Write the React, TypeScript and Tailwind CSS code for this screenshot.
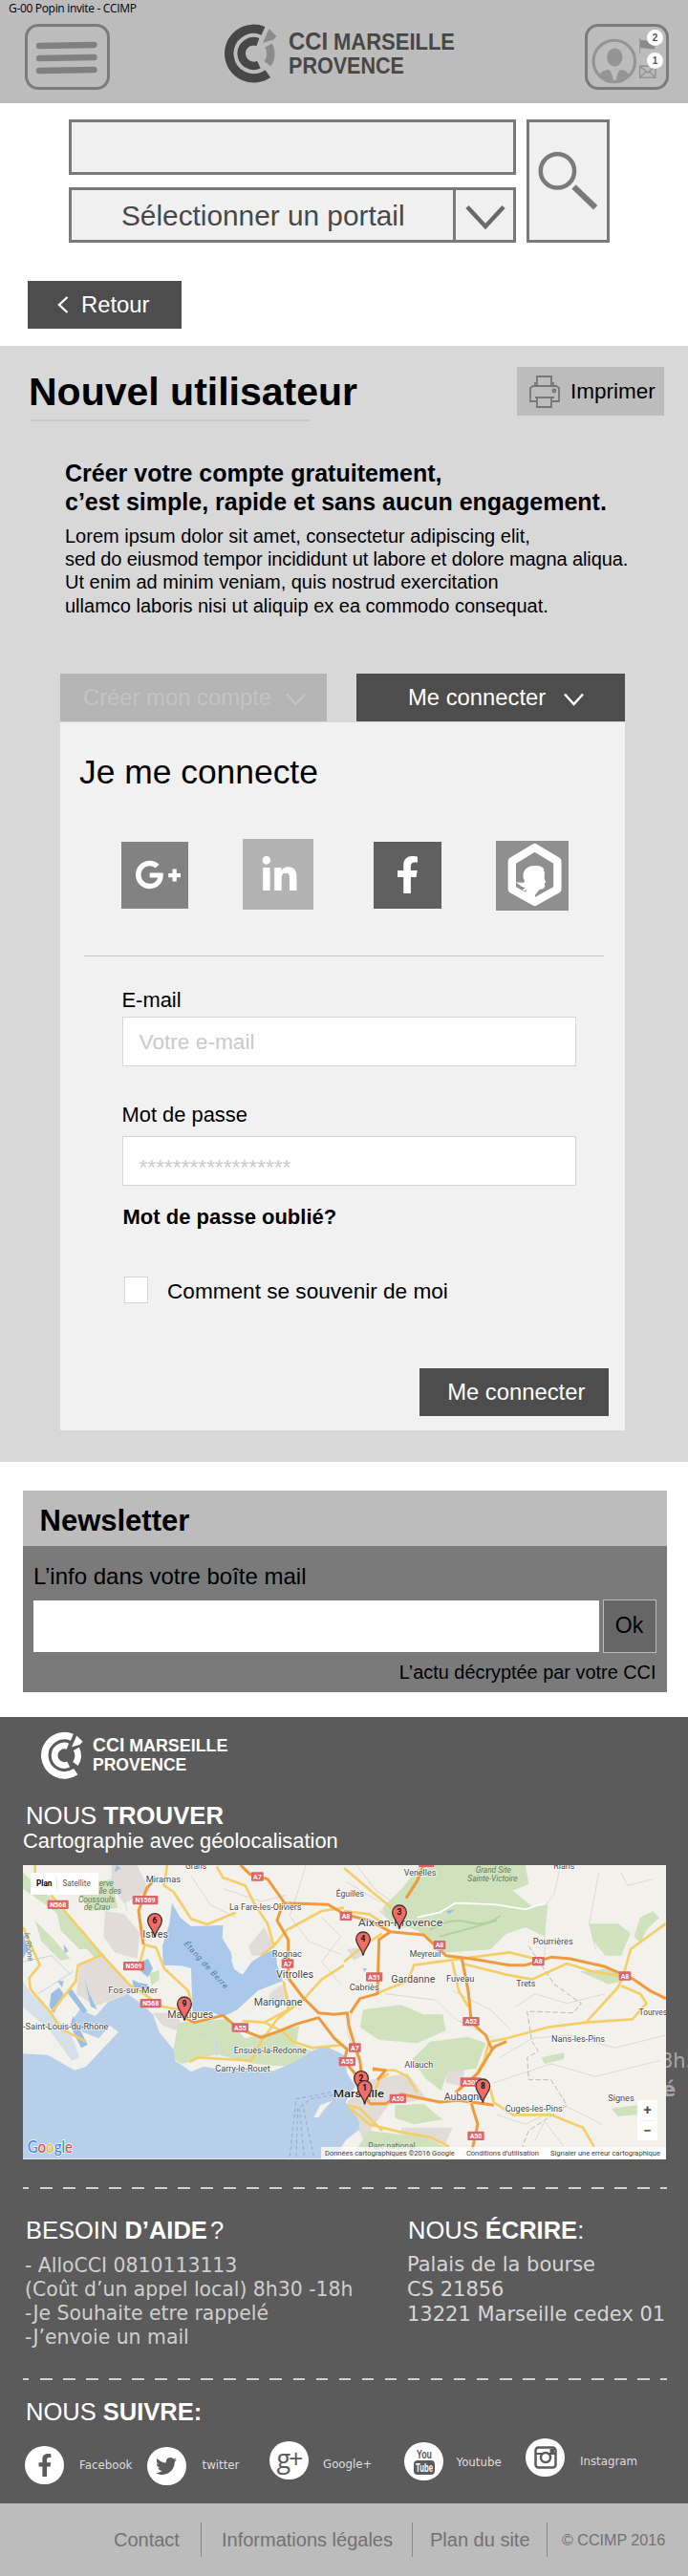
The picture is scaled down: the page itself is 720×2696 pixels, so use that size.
import type { ReactNode } from "react";
import { FaFacebookF, FaGooglePlusG, FaLinkedinIn, FaTwitter } from "react-icons/fa";

export default function App() {
  return (
    <div className="w-[720px] overflow-hidden bg-white font-['Liberation_Sans',Arial,sans-serif] text-black">
      <Header />
      <SearchBar />
      <div className="pt-[40px] pb-[17.5px] pl-[29px]">
        <button className="flex h-[50px] w-[160.5px] items-center bg-[#4d4d4d] pl-[31px] text-[23.8px] text-white">
          <svg width="12" height="18" viewBox="0 0 12 18" fill="none" className="mr-[13px]">
            <path d="M10.5 1 2 9l8.5 8" stroke="currentColor" strokeWidth="2.4" />
          </svg>
          Retour
        </button>
      </div>
      <NewUser />
      <Newsletter />
      <Footer />
    </div>
  );
}

function Emblem({ light, className }: { light?: boolean; className: string }) {
  const main = light ? "#fff" : "#474747";
  const accent = light ? "#fff" : "#8b8b8b";
  return (
    <svg viewBox="234.5 24.5 55 62" className={className} fill="none">
      <path d="M275 31.8A25.75 25.75 0 1 0 279.8 76.6" stroke={main} strokeWidth="9.5" />
      <path d="M269.4 43.5A12.8 12.8 0 1 0 270.4 67.1" stroke={main} strokeWidth="8.5" />
      <path d="M280.5 47A18 18 0 0 1 279.4 66.3" stroke={accent} strokeWidth="8.5" />
      <path d="M281 29.5 289 37.5 285.5 41 274.5 44.5Z" fill={accent} />
    </svg>
  );
}

function Wordmark({ light, className }: { light?: boolean; className: string }) {
  return (
    <svg
      viewBox="0 0 176 48"
      className={className}
      fill={light ? "#fff" : "#474747"}
      fontFamily="'Liberation Sans', Arial, sans-serif"
      fontWeight="700"
    >
      <text x="0" y="20" fontSize="26" textLength="41" lengthAdjust="spacingAndGlyphs">CCI</text>
      <text x="47" y="20" fontSize="23" textLength="127" lengthAdjust="spacingAndGlyphs">MARSEILLE</text>
      <text x="0" y="44.5" fontSize="23.5" textLength="121" lengthAdjust="spacingAndGlyphs">PROVENCE</text>
    </svg>
  );
}

function Header() {
  return (
    <header className="h-[108px] bg-[#bcbcbc]">
      <div className="h-[25px] pl-[9px] font-['Open_Sans',sans-serif] text-[12px] leading-[17.5px] tracking-[-0.32px]">
        G-00 Popin invite - CCIMP
      </div>
      <div className="flex h-[69px] pr-[20px] pl-[26px]">
        <button className="h-[69px] w-[88.5px] rounded-[14px] border-[3.5px] border-[#7b7b7b]">
          <svg viewBox="0 0 82 62" className="h-full w-full" stroke="#808080" strokeWidth="6.5" strokeLinecap="round">
            <path d="M12 19.5 69 18.5M12 32.5 69 31.5M12 45.5 69 44.5" />
          </svg>
        </button>
        <div className="ml-[120px] flex">
          <Emblem className="h-[62px] w-[55px]" />
          <Wordmark className="mt-[7px] ml-[12.5px] h-[48px] w-[176px] overflow-visible" />
        </div>
        <div className="relative ml-auto h-[69px] w-[88.5px] rounded-[14px] border-[3.5px] border-[#7b7b7b]">
          <svg viewBox="615 28.5 81.5 62" className="h-full w-full">
            <circle cx="642.5" cy="64" r="21.5" fill="none" stroke="#949494" strokeWidth="3" />
            <ellipse cx="643" cy="60" rx="8" ry="9.5" fill="#949494" />
            <path d="M627 80c1-5 5-7 10-7.5 3 3 4 8 4.5 12-5 1-10-1-14.5-4.5ZM658 80c-1-5-5-7-9-7.5-3 3-4.5 8-5 12 5 1 10-1 14-4.5Z" fill="#949494" />
            <path d="M669 40v16M669 43c5-2 7 2 15 0v8c-8 1-9-2-15-1Z" fill="#8a8a8a" stroke="#949494" />
            <path d="M669 69h16v12h-16ZM669 69l8 7 8-7M669 81l6-6M685 81l-6-6" fill="none" stroke="#949494" strokeWidth="1.5" />
          </svg>
          <Badge className="top-[3px]">2</Badge>
          <Badge className="top-[27px]">1</Badge>
        </div>
      </div>
    </header>
  );
}

function Badge({ children, className }: { children: ReactNode; className: string }) {
  return (
    <span
      className={`${className} absolute right-[3px] flex h-[17px] w-[17px] items-center justify-center rounded-full bg-white text-[10px] font-bold text-[#555]`}
    >
      {children}
    </span>
  );
}

function SearchBar() {
  return (
    <div className="flex h-[146px] pt-[17px] pl-[72px]">
      <div className="w-[468px]">
        <div className="h-[58px] border-3 border-[#7a7a7a] bg-[#f0f0f0]" />
        <div className="mt-[13px] flex h-[58px] border-3 border-[#7a7a7a] bg-[#f0f0f0]">
          <div className="w-[402px] border-r-3 border-[#7a7a7a] pl-[52px] text-[29.8px] leading-[54px] whitespace-nowrap text-[#484848]">
            Sélectionner un portail
          </div>
          <svg viewBox="0 0 60 52" className="h-[52px] w-[60px]" fill="none">
            <path d="M12 17.5 31 38 50 17.5" stroke="#6a6a6a" strokeWidth="4.5" />
          </svg>
        </div>
      </div>
      <button className="ml-[11px] h-[129px] w-[87px] border-[3.5px] border-[#7a7a7a] bg-[#f0f0f0]">
        <svg viewBox="554.5 128.5 80 122" className="h-full w-full" fill="none" stroke="#7a7a7a">
          <circle cx="583.5" cy="179" r="17.5" strokeWidth="4.5" />
          <path d="M600.5 195.5 623 217" strokeWidth="6" />
        </svg>
      </button>
    </div>
  );
}

function Chevron({ className }: { className: string }) {
  return (
    <svg viewBox="0 0 21 14" className={`${className} h-[14px] w-[21px]`} fill="none">
      <path d="M1 1.5 10.5 12 20 1.5" stroke="currentColor" strokeWidth="2.5" />
    </svg>
  );
}

function NewUser() {
  return (
    <section className="h-[1168px] bg-[#d8d8d8] pt-[22.5px]">
      <div className="flex h-[51px] justify-between pr-[25px] pl-[30px]">
        <h1 className="mt-px text-[41px] leading-[50px] font-bold whitespace-nowrap">Nouvel utilisateur</h1>
        <button className="flex w-[154px] items-center bg-[#bcbcbc] pl-[13px] text-[22.5px]">
          <svg width="32" height="34" viewBox="0 0 32 34" fill="none" stroke="#777" strokeWidth="1.8" className="mr-[11px]">
            <path d="M8 11V1h15v10M8 27H1V13l3-2h24l3 2v14h-7M6 23h20M8 23v10h15V23" />
            <path d="M6 7v4M25 7v4" />
            <circle cx="26" cy="16" r="1.5" />
          </svg>
          Imprimer
        </button>
      </div>
      <div className="mt-[4px] ml-[32px] h-[2px] w-[293px] bg-[#cacaca]" />

      <h2 className="pt-[39px] pl-[68px] text-[25px] leading-[30px] font-bold whitespace-nowrap">
        Créer votre compte gratuitement,
        <br />
        c’est simple, rapide et sans aucun engagement.
      </h2>
      <p className="pt-[9px] pl-[68px] text-[20px] leading-[24.2px] whitespace-nowrap">
        Lorem ipsum dolor sit amet, consectetur adipiscing elit,
        <br />
        <span className="tracking-[-0.12px]">sed do eiusmod tempor incididunt ut labore et dolore magna aliqua.</span>
        <br />
        Ut enim ad minim veniam, quis nostrud exercitation
        <br />
        ullamco laboris nisi ut aliquip ex ea commodo consequat.
      </p>

      <div className="mx-[63px] mt-[59px] flex w-[590.5px] justify-between text-[23.8px] leading-[49px] whitespace-nowrap">
        <button className="flex h-[50px] w-[278.5px] bg-[#b4b4b4] pl-[24px] text-[#c3c3c3]">
          Créer mon compte
          <Chevron className="mt-[20px] ml-[15px]" />
        </button>
        <button className="flex h-[50px] w-[280.5px] bg-[#4d4d4d] pl-[54px] text-white">
          Me connecter
          <Chevron className="mt-[20px] ml-[19px]" />
        </button>
      </div>
      <LoginCard />
    </section>
  );
}

function LoginCard() {
  return (
    <div className="mx-[63px] mt-px h-[741px] w-[590.5px] bg-[#f1f1f1] pt-[32px]">
      <h3 className="pl-[20px] text-[35.4px] leading-[40px]">Je me connecte</h3>
      <div className="mt-[50px] flex h-[75px] items-start pl-[63.5px] text-white">
        <div className="mt-[3px] flex h-[70px] w-[70.5px] items-center bg-[#828282] pl-[14px]">
          <FaGooglePlusG className="h-[49px] w-[49px]" />
        </div>
        <div className="ml-[57px] h-[74px] w-[73.5px] bg-[#b3b3b3] pt-[18px] pl-[18px]">
          <FaLinkedinIn className="h-[41px] w-[41px]" />
        </div>
        <div className="mt-[3px] ml-[63.5px] flex h-[70px] w-[70.5px] items-center justify-center bg-[#606060]">
          <FaFacebookF className="h-[39px] w-[39px]" />
        </div>
        <div className="mt-[2px] ml-[57px] h-[73px] w-[76.5px] bg-[#8f8f8f]">
          <svg viewBox="1245 60 220 218" className="h-full w-full">
            <path
              d="M1362 81 1433 124V211L1362 251 1291 211V124Z"
              fill="none"
              stroke="#fff"
              strokeWidth="25"
              strokeLinejoin="round"
            />
            <path
              d="M1362 138c12-2 24 2 29 10l-2 5 4 3-1 22 5 12-5 4 2 8-4 7-14 4-13 17v10l-32-15 7-14-8 6-6-4 8-6-13-5-16-13 16 2h10l1-8-4-8c-2-23 12-37 36-37Z"
              fill="#fff"
            />
          </svg>
        </div>
      </div>
      <div className="mt-[47px] ml-[25px] h-px w-[544px] bg-[#c6c6c6]" />
      <div className="pt-[33px] pl-[64.5px] text-[21.9px] leading-[26px]">
        <div>E-mail</div>
        <Field className="mt-[4px] leading-[51px]">Votre e-mail</Field>
        <div className="mt-[38px]">Mot de passe</div>
        <Field className="mt-[9px] pt-[6px] leading-[50px]">******************</Field>
        <div className="mt-[20px] pl-px text-[22px] font-bold">Mot de passe oublié?</div>
        <label className="mt-[49px] flex h-[28px] pl-[2.5px] text-[22.6px] leading-[31px]">
          <span className="mr-[20px] h-[28px] w-[25px] border border-[#d5d5d5] bg-white" />
          Comment se souvenir de moi
        </label>
      </div>
      <button className="mt-[68px] ml-[376.3px] h-[50px] w-[198px] bg-[#4d4d4d] pl-[4px] text-[23.8px] leading-[48px] text-white">
        Me connecter
      </button>
    </div>
  );
}

function Field({ children, className }: { children: ReactNode; className: string }) {
  return (
    <div className={`${className} h-[52px] w-[475.5px] border border-[#d6d6d6] bg-white pl-[17px] text-[22.7px] text-[#cacaca]`}>
      {children}
    </div>
  );
}

function Newsletter() {
  return (
    <section className="mt-[30px] ml-[23.5px] h-[211.5px] w-[674.5px] bg-[#7a7a7a]">
      <h2 className="h-[58px] bg-[#bcbcbc] pl-[18px] text-[31px] leading-[63px] font-bold">Newsletter</h2>
      <div className="px-[11.5px] pt-[18px]">
        <div className="text-[24px] leading-[28px]">L’info dans votre boîte mail</div>
        <div className="mt-[10px] flex h-[56px] items-center justify-between">
          <div className="h-[54px] w-[592px] bg-white" />
          <button className="h-[56px] w-[56px] border border-[#bbb] bg-[#666] text-[23px]">Ok</button>
        </div>
        <div className="mt-[8px] text-right text-[19.9px] leading-[24px]">L’actu décryptée par votre CCI</div>
      </div>
    </section>
  );
}

function Dashes({ className }: { className: string }) {
  return (
    <div
      className={`${className} h-[2px] w-[674px] bg-[repeating-linear-gradient(90deg,#d0d0d0_0,#d0d0d0_6.5px,transparent_6.5px,transparent_18px,#d0d0d0_18px,#d0d0d0_24.05px)]`}
    />
  );
}

function Footer() {
  return (
    <footer className="mt-[26px] bg-[#5b5b5b] text-white">
      <div className="h-[823px] pt-[15px] pl-[24px]">
        <div className="flex h-[50.5px] pl-[19px]">
          <Emblem light className="h-[50.5px] w-[44px]" />
          <Wordmark light className="mt-[5px] ml-[10px] h-[39.3px] w-[143px] overflow-visible" />
        </div>
        <h3 className="mt-[22.5px] pl-[3px] text-[25.7px] leading-[30px]">
          NOUS <b>TROUVER</b>
        </h3>
        <div className="text-[21.9px] leading-[24px]">Cartographie avec géolocalisation</div>
        <div className="relative mt-[13px] h-[308px]">
          <div className="absolute top-[190px] left-[667px] font-['DejaVu_Sans',sans-serif] text-[21px] leading-[30px] text-[#a6a6a6]">
            8h30
            <br />
            <b className="pl-[2px]">é</b>
          </div>
          <Map />
        </div>
        <Dashes className="mt-[29px]" />
        <div className="mt-[28px] flex h-[170px] whitespace-nowrap">
          <div className="w-[403px]">
            <h3 className="pl-[3px] text-[25.5px] leading-[30px]">
              BESOIN <b>D’AIDE</b> <span className="-ml-[4px]">?</span>
            </h3>
            <div className="mt-[9.5px] pl-[2px] font-['DejaVu_Sans',sans-serif] text-[20.4px] leading-[25px] text-[#cfcfcf]">
              - AlloCCI 0810113113
              <br />
              (Coût d’un appel local) 8h30 -18h
              <br />
              -Je Souhaite etre rappelé
              <br />
              -J’envoie un mail
            </div>
          </div>
          <div>
            <h3 className="text-[25.5px] leading-[30px]">
              NOUS <b>ÉCRIRE</b>:
            </h3>
            <div className="mt-[7.5px] -ml-px font-['DejaVu_Sans',sans-serif] text-[21px] leading-[26px] text-[#d6d6d6]">
              Palais de la bourse
              <br />
              CS 21856
              <br />
              13221 Marseille cedex 01
            </div>
          </div>
        </div>
        <Dashes className="" />
        <h3 className="mt-[18px] pl-[3px] text-[25.5px] leading-[30px]">
          NOUS <b>SUIVRE:</b>
        </h3>
        <Socials />
      </div>
      <nav className="flex h-[76px] items-center bg-[#bcbcbc] pb-[1px] text-[20px] leading-[36px] whitespace-nowrap text-[#727272]">
        <a className="ml-[119px] w-[92px] border-r border-[#888]">Contact</a>
        <a className="w-[221px] border-r border-[#888] pl-[21px]">Informations légales</a>
        <a className="w-[141px] border-r border-[#888] pl-[18px]">Plan du site</a>
        <span className="pl-[15px] text-[16.1px]">© CCIMP 2016</span>
      </nav>
    </footer>
  );
}

function Social({ label, className, gap, children }: { label: string; className: string; gap: string; children: ReactNode }) {
  return (
    <div className={`${className} flex`}>
      <span className="flex h-[40px] w-[41px] items-center justify-center rounded-full bg-white text-[#5b5b5b]">
        {children}
      </span>
      <span className={gap}>{label}</span>
    </div>
  );
}

function Socials() {
  return (
    <div className="flex items-start pl-[2px] font-['DejaVu_Sans',sans-serif] text-[11.8px] leading-[20px] text-[#dedede]">
      <Social label="Facebook" className="mt-[20.5px] w-[127.5px]" gap="mt-[10px] ml-[16px]">
        <FaFacebookF className="h-[24px] w-[24px]" />
      </Social>
      <Social label="twitter" className="mt-[22px] w-[128.5px]" gap="mt-[9px] ml-[17px]">
        <FaTwitter className="h-[22px] w-[22px]" />
      </Social>
      <Social label="Google+" className="mt-[16px] w-[141px]" gap="mt-[14px] ml-[15px]">
        <span className="-mt-[5px] font-['Open_Sans',sans-serif] text-[27px] tracking-[-2px]">g+</span>
      </Social>
      <Social label="Youtube" className="mt-[17px] w-[127px]" gap="mt-[10.5px] ml-[13.5px]">
        <svg viewBox="0 0 30 32" className="h-[32px] w-[30px]" fontFamily="'Liberation Sans', sans-serif" fontWeight="700">
          <text x="7" y="13" fontSize="13" fill="#5b5b5b" textLength="16" lengthAdjust="spacingAndGlyphs">You</text>
          <rect x="4" y="15" width="22" height="15" rx="4" fill="#5b5b5b" />
          <text x="6" y="27" fontSize="12" fill="#fff" textLength="18" lengthAdjust="spacingAndGlyphs">Tube</text>
        </svg>
      </Social>
      <Social label="Instagram" className="mt-[12.5px]" gap="mt-[14px] ml-[16px]">
        <svg viewBox="0 0 24 24" className="h-[24px] w-[24px]" fill="none" stroke="#5b5b5b">
          <rect x="1.5" y="1.5" width="21" height="21" rx="3" strokeWidth="2.5" />
          <path d="M1 8h7M16 8h7" strokeWidth="2" />
          <circle cx="12" cy="12" r="5" strokeWidth="2.5" />
          <rect x="17" y="3.5" width="3.5" height="3.5" fill="#5b5b5b" />
        </svg>
      </Social>
    </div>
  );
}

// x, baseline, width, size, text
const towns: [number, number, number, number, string][] = [
  [582, 47, 66, 25, "Grans"],
  [458, 90, 109, 27, "Miramas"],
  [720, 177, 226, 27, "La Fare-les-Oliviers"],
  [1055, 136, 88, 27, "Éguilles"],
  [448, 265, 80, 30, "Istres"],
  [854, 323, 94, 27, "Rognac"],
  [867, 391, 117, 31, "Vitrolles"],
  [340, 437, 155, 27, "Fos-sur-Mer"],
  [797, 477, 152, 31, "Marignane"],
  [526, 515, 144, 31, "Martigues"],
  [72, 553, 268, 27, "-Saint-Louis-du-Rhône"],
  [734, 627, 228, 27, "Ensuès-la-Redonne"],
  [676, 684, 172, 27, "Carry-le-Rouet"],
  [1268, 68, 101, 27, "Venelles"],
  [1738, 49, 66, 25, "Rians"],
  [1124, 228, 266, 35, "Aix-en-Provence"],
  [1286, 325, 98, 27, "Meyreuil"],
  [1228, 405, 138, 31, "Gardanne"],
  [1401, 402, 88, 27, "Fuveau"],
  [1097, 430, 93, 27, "Cabriès"],
  [1621, 416, 60, 27, "Trets"],
  [1673, 286, 126, 27, "Pourrières"],
  [2006, 506, 88, 27, "Tourves"],
  [1731, 592, 168, 27, "Nans-les-Pins"],
  [1270, 671, 90, 27, "Allauch"],
  [1394, 773, 126, 30, "Aubagne"],
  [1909, 776, 82, 27, "Signes"],
  [1586, 811, 180, 27, "Cuges-les-Pins"],
];

const shields: [number, number, string][] = [
  [182, 160, "N568"],
  [456, 146, "N1569"],
  [420, 353, "N569"],
  [473, 470, "N568"],
  [808, 72, "A7"],
  [903, 345, "A7"],
  [754, 546, "A55"],
  [1086, 196, "A8"],
  [1380, 287, "A8"],
  [1690, 338, "A8"],
  [1962, 384, "A8"],
  [1175, 387, "A51"],
  [1479, 527, "A52"],
  [1114, 609, "A7"],
  [1090, 653, "A55"],
  [1249, 769, "A50"],
  [1478, 717, "A501"],
  [1494, 886, "A50"],
];

const pins: [number, number, string][] = [
  [486, 210, "6"],
  [579, 472, "9"],
  [1254, 184, "3"],
  [1140, 268, "4"],
  [1134, 705, "2"],
  [1145, 735, "1"],
  [1516, 730, "8"],
];

function Map() {
  return (
    <div className="relative h-[308px] w-[673px] overflow-hidden bg-[#f3f1eb]">
      <svg viewBox="72 36 2019 924" className="h-full w-full" fontFamily="Roboto, sans-serif">
        {/* built-up areas */}
        <g fill="#e1dcd7">
          <path d="M350 36h80l40 80-80 40-40-50ZM330 180l60 10 50 60-10 80-70-20-35-50ZM250 350l70-30 50 50 50 60-120 50-60-40ZM780 290l50-60 30 60-20 30-50 0ZM850 430l40-20 10 50-60 10ZM480 500l80 0 10 60-60-20ZM1160 710l120-20 60 80-120 20-80 110-50-120ZM1400 640l60 30-10 60-50-10ZM1090 300l40-5 10 25-30 15Z" />
          <path d="M1260 860l160 0-20 50-140-10ZM1190 180l70-20 50 60-60 20Z" />
        </g>
        {/* parks */}
        <g fill="#cfe2bd">
          <path d="M72 60 150 130 330 320 300 330 170 180 72 110ZM230 100l120-20 20 90-90 10ZM110 210l60 60 50 60-30 5-60-60ZM180 190l80 50 50 60-60 0-60-60Z" />
          <path d="M1320 36h330l10 60-50 20 60 50 50-5-10 100-60-30-60 20-50 50-150 10-80-70-90-30-20-40 60-60Z" />
          <path d="M1140 490l120-15 70 30 60 0 10 50-90 40-120-10-60-40ZM1350 590l120-15 55 20-30 80-90 10-20 60-50-40-40-60Z" />
          <path d="M560 530l150-10 60 60 170-40-10 60 50 20-60 50-120-10-120-30-110 30-30-20Z" />
          <path d="M1850 220l90 0 40 30-30 70-50 0-40-50ZM2010 200l40-20 20 20-40 40-20 40-20-20ZM1700 640l70-15 0 20-60 15ZM1920 800l80-10 0 30-60 5ZM1240 790l90-5 60 50-90 15-60-20ZM1160 870l170 20 80 35v30h-310Z" />
          <path d="M470 375l30-10 0 30-25 20ZM1820 370l100-10 40 40-50 10Z" />
        </g>
        {/* relief and minor roads */}
        <g fill="none" stroke="#ddd9d2" strokeWidth="3">
          <path d="M360 36 380 110 400 180M600 70l60 90 80 40M700 110l120 40 80-20M960 36l-30 100-20 60 60 80 100 40M1010 200l60 60-60 80 60 70M1120 36l60 80 60 40M1090 90l100 60M1760 36l-20 90-30 40 0 160M1880 60l-30 160 20 80M1950 60l20 40 80-20" />
          <path d="M1210 440l160 20 60 60 120 60M1420 430l120 60 60 60M1570 640l100-60 120-10 140 40 160-40M1550 720l180-60 140 40 200-50M1560 820l90 30 120-60 120 60M1620 480l60-40 100 30 120-30M1110 480l-20 80 30 80M1680 900l30-60 60 80" />
          <path d="M120 440 230 370M72 340l90-20 60 60M620 560l60 20 0 60" stroke="#c4d6e8" />
        </g>
        <path d="M1660 290 1740 410 1825 470 1800 500 1655 495 1670 590 1690 620 1655 640 1660 710 1730 710 1780 790 1660 870 1640 920" fill="none" stroke="#bdb9b4" strokeWidth="3" strokeDasharray="16 8" />
        <path d="M1310 200 1380 185 1430 155 1560 160 1650 175 1710 155" fill="none" stroke="#fff" strokeWidth="5" />
        <path d="M1350 240q60-40 120-25t100-20M1380 260q80-20 180-50" fill="none" stroke="#b5cf9f" strokeWidth="6" />

        {/* sea and lagoons */}
        <g fill="#b7cfe9">
          <path d="M72 628 150 632 235 680 270 668 372 560 345 540 310 580 260 560 230 520 250 490 300 510 340 465 400 440 440 468 480 505 500 560 545 615 550 650 600 685 640 668 700 680 860 682 925 655 980 620 1020 603 1080 632 1090 690 1115 730 1085 780 1125 835 1130 865 1085 900 1050 958H72Z" />
          <path d="M72 400 90 430 150 490 220 560 250 640 225 650 160 560 72 480Z" opacity=".5" />
        </g>
        <path d="M540 155 565 200 600 228 700 225 698 265 725 310 735 355 762 380 790 340 820 320 865 300 870 350 888 400 810 430 745 490 700 512 660 495 605 500 600 360 570 352 512 350 510 290 532 220Z" fill="#a9c8ea" />
        <g fill="#9dbfe4">
          <path d="M440 340l25-10 15 30-15 28-25-20ZM415 395l20 10 30 5-5 18-40-8ZM160 440l25-20 15 20-30 60-15-20ZM180 400l20 0-5 20ZM265 390l15 50 25 50-20-10ZM225 425l50 70-15 5-50-65ZM200 285l15 20-12 8ZM365 36l15 10-20 12ZM72 250l15 50-15 30Z" />
          <path d="M230 510 275 600 255 610 220 540ZM1400 180l30-5-20 14ZM1140 360l12 0-8 12Z" />
        </g>
        <path d="M725 330l35 0 15 25-20 22-20-15Z" fill="#eef2f0" />
        <path d="M985 828 1005 790 1045 775 1020 800 1000 828ZM366 555 250 662 238 655 340 570Z" fill="#f3f1eb" />
        <path d="M755 515 880 410" stroke="#e8eef2" strokeWidth="5" />
        <g fill="none" stroke="#9bb4d0" strokeWidth="4" strokeDasharray="12 8">
          <path d="M910 950 930 770 1060 745M930 950l5-150 40-30 90-15M955 950l-15-150M985 950l-35-160" />
        </g>

        {/* secondary roads */}
        <g fill="none" stroke="#f3cf6a" strokeWidth="8" strokeLinejoin="round">
          <path d="M110 36v30M160 130 320 318 410 415 450 440 510 480 560 490M320 318 245 350 238 400 160 500 95 425 92 390 125 350 72 230M160 500 190 550 270 590" />
          <path d="M525 36 515 100 545 120 600 205 650 222 740 185M680 40 700 75 770 100 800 160 840 220 860 290 820 318M860 290 900 240 1010 180 1080 170M450 285 490 295 515 360 590 430 600 460M440 340 455 285" />
          <path d="M1080 350 1010 395 955 455 870 520 820 590 790 650 620 640 595 655M900 440 905 490 830 530 760 525M830 530 890 560 920 590 980 610 1080 600M890 400l12 60" />
          <path d="M1080 45 1180 130 1230 170M1080 180 1160 190 1220 230M1080 340 1140 290 1200 250M1180 440 1280 400 1300 350 1410 335 1600 310 1680 330M1420 340 1440 430 1470 480M1450 345 1590 380 1670 395 1780 345 1860 370 1950 385M2090 220 1980 300 1955 390 1940 420 1840 530 1720 545 1590 580 1540 590M1950 415 2010 440 2030 470 1985 520 1840 530" />
          <path d="M1170 680 1240 680 1280 700 1310 750M1170 760 1190 710 1220 690M1535 590 1520 650 1490 700M1540 740 1550 780 1610 820 1730 820 1830 860 1865 920M1100 800 1160 850 1260 875 1350 890 1410 920M1090 790 1130 800 1200 870" />
        </g>
        {/* motorways */}
        <g fill="none" stroke="#ef9a3d" strokeWidth="9" strokeLinejoin="round">
          <path d="M485 80 460 110 435 180 450 285M755 36 785 65 840 80 890 150 870 210 905 270 905 390 950 450 1000 500 1050 505 1090 500 1095 540 1110 590 1130 650 1140 740 1160 785M890 155 1030 160 1080 190 1160 210 1225 245 1330 255 1400 320 1480 330 1600 350 1650 350 1730 325 1790 330 1900 355 1990 395 2040 430 2091 455" />
          <path d="M580 515 610 530 700 508 750 550 820 577 870 560 930 535 1000 515 1050 580 1090 615 1080 650 1140 720" />
          <path d="M1330 36 1310 85 1275 140M1225 245 1190 270 1185 440 1130 455 1100 500M1450 330 1470 430 1480 530 1525 570 1545 615 1500 690 1430 750M1590 590 1555 605 1540 620M1160 785 1210 785 1260 755 1380 780 1440 775 1520 785 1550 790M1480 785 1500 850 1480 940M1170 675 1210 680 1185 710" />
        </g>

        {shields.map(([x, y, text]) => (
          <g key={`${text}-${x}`}>
            <rect x={x - text.length * 7 - 5} y={y - 14} width={text.length * 14 + 10} height="28" rx="3" fill="#dd6468" />
            <text x={x} y={y + 8} fontSize="21" fontWeight="700" fill="#fff" textAnchor="middle">{text}</text>
          </g>
        ))}
        <rect x="1315" y="36" width="48" height="6" fill="#dd6468" />

        <g fill="#46484c" stroke="#fff" strokeWidth="5" strokeOpacity=".75" paintOrder="stroke">
          {towns.map(([x, y, w, size, text]) => (
            <text key={text} x={x} y={y} fontSize={size} textLength={w} lengthAdjust="spacingAndGlyphs">{text}</text>
          ))}
          <text x="1046" y="766" fontSize="35" fontWeight="500" fill="#222" textLength="160" lengthAdjust="spacingAndGlyphs">Marseille</text>
        </g>
        <text x="1156" y="926" fontSize="25" fill="#66705f" textLength="148" lengthAdjust="spacingAndGlyphs">Parc national</text>
        <g fill="#5f7d5d" fontSize="25" fontStyle="italic">
          <text x="311" y="102">erve</text>
          <text x="311" y="127">lle des</text>
          <text x="246" y="152">Coussouls</text>
          <text x="263" y="177">de Crau</text>
          <text x="1493" y="61">Grand Site</text>
          <text x="1468" y="86">Sainte-Victoire</text>
        </g>
        <g fill="#547aa3" fontSize="25" fontStyle="italic">
          <text transform="translate(576 284) rotate(47.5)" textLength="192">Étang de Berre</text>
          <text transform="translate(76 250) rotate(82)" fontSize="24">le Rhône</text>
        </g>

        {pins.map(([x, y, n]) => (
          <g key={n}>
            <path
              d={`M${x} ${y + 52}C${x - 3} ${y + 28} ${x - 22} ${y + 20} ${x - 22} ${y}a22 22 0 0 1 44 0C${x + 22} ${y + 20} ${x + 3} ${y + 28} ${x} ${y + 52}Z`}
              fill="#ef6d66"
              stroke="#453030"
              strokeWidth="4"
            />
            <text x={x} y={y + 9} fontSize="25" fontWeight="700" textAnchor="middle" fill="#111">{n}</text>
          </g>
        ))}

        <g fontSize="51" fontWeight="500" fontFamily="Lato, sans-serif" stroke="#fff" strokeWidth="4" paintOrder="stroke">
          <text x="86" y="938" textLength="142" lengthAdjust="spacingAndGlyphs">
            <tspan fill="#4285dc">G</tspan>
            <tspan fill="#dc4d41">o</tspan>
            <tspan fill="#edb82c">o</tspan>
            <tspan fill="#4285dc">g</tspan>
            <tspan fill="#3ca55c">l</tspan>
            <tspan fill="#dc4d41">e</tspan>
          </text>
        </g>
      </svg>
      <div className="absolute top-[8px] left-[8px] flex h-[23px] w-[71px] items-center bg-white pl-[6px] font-['Roboto',sans-serif] text-[8.2px] whitespace-nowrap text-[#555]">
        <b className="mr-[5px] border-r border-[#e8e8e8] pr-[5px] text-black">Plan</b>
        Satellite
      </div>
      <div className="absolute right-[9px] bottom-[20px] flex h-[42px] w-[21px] flex-col items-center bg-white font-['Roboto',sans-serif] text-[15px] leading-[21px] font-bold text-[#555]">
        <span>+</span>
        <span className="w-[15px] border-t border-[#eee] text-center">−</span>
      </div>
      <div className="absolute right-0 bottom-0 flex h-[13px] w-[361px] items-center justify-between bg-white/75 pr-[6px] pl-[4px] font-['Roboto',sans-serif] text-[7.6px] tracking-[-0.05px] whitespace-nowrap text-[#444]">
        <span>Données cartographiques ©2016 Google</span>
        <span>Conditions d’utilisation</span>
        <span>Signaler une erreur cartographique</span>
      </div>
    </div>
  );
}
